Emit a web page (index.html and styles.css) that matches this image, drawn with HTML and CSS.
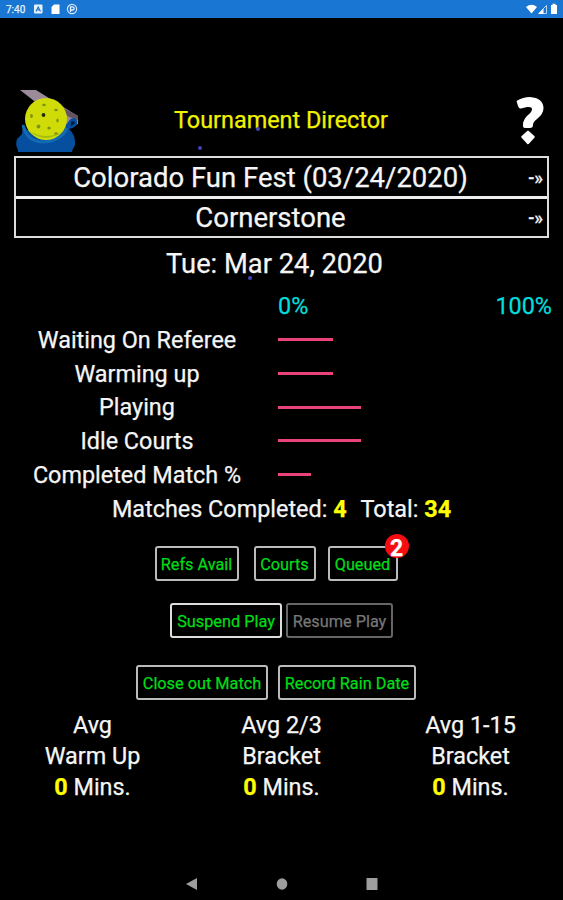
FILE: index.html
```
<!DOCTYPE html>
<html lang="en">
<head>
    <meta charset="UTF-8" />
    <meta name="viewport" content="width=device-width, initial-scale=1" />
    <title>Tournament Director</title>
    <link rel="stylesheet" href="styles.css">
</head>
<body>
    <div class="status-bar">
        <span class="time">7:40</span>
        <svg class="status-left" width="46" height="12" viewBox="0 0 46 12">
            <rect x="1" y="1.5" width="8.5" height="9" rx="1" fill="#e8f1fa" />
            <path d="M3 8.5L5.2 4L7.5 8.5M4 7h2.5" fill="none" stroke="#1976d2" stroke-width="1.2" />
            <path d="M21 1.5h5.5v9.5h-8V4z" fill="#fff" />
            <circle cx="39" cy="6" r="4.6" fill="none" stroke="#d3e5f7" stroke-width="1.2" />
            <path d="M37.5 9V3.8h2a1.6 1.6 0 0 1 0 3.2h-2" fill="none" stroke="#e8f1fa" stroke-width="1.3" />
        </svg>
        <svg class="status-right" width="34" height="12" viewBox="0 0 34 12">
            <path d="M1 4Q6.500 -.5 12 4L6.500 10.500z" fill="#fff" />
            <path d="M13.500 10.500L21.500 2.500V10.500z" fill="none" stroke="#b9d6f2" stroke-width="1" />
            <path d="M13.500 11L18.500 5.500V11z" fill="#fff" />
            <path d="M26 2h1.500V.7h3V2H32v9h-6z" fill="#fff" />
        </svg>
    </div>

    <div class="container">
        <header class="header">
            <svg class="logo" width="64" height="64" viewBox="0 0 64 64">
                <path d="M5 0H21L58 23L63 26V34L57 36L46 32z" fill="#9b8b9a" />
                <path d="M36 12L58 23L63 26V30L54 27L44 19z" fill="#65535f" />
                <path d="M8 34L12 40L48 38L54 31Q55 28 60 28Q63 30 62 34Q60 38 54 39Q61 45 60 55L57 61V62H3V60Q0 55 2 49L7 44z" fill="#064f9e" />
                <path d="M8 35Q12 52 28 52Q46 51 52 38" fill="none" stroke="#116bb5" stroke-width="3" />
                <path d="M56 32Q59 30 60 33Q59 35 56 36z" fill="#041c38" />
                <circle cx="31" cy="29" r="21" fill="#d0dc08" />
                <path d="M14 41Q31 55 48 41Q32 51 14 41" fill="#a5bd10" />
                <g fill="#7e9312">
                    <ellipse cx="29" cy="15" rx="1.800" ry="1.200" />
                    <ellipse cx="41" cy="20" rx="1.800" ry="1.200" />
                    <ellipse cx="16.500" cy="26" rx="1.400" ry="2" />
                    <ellipse cx="42.500" cy="30.500" rx="1.200" ry="2" />
                    <ellipse cx="23.500" cy="36.500" rx="1.900" ry="2.100" />
                    <ellipse cx="34" cy="38" rx="1.700" ry="1.500" />
                    <ellipse cx="41" cy="43.500" rx="1.700" ry="1.200" />
                </g>
                <circle cx="28.500" cy="25" r="1.900" fill="#252b08" />
            </svg>
            <h1>Tournament Director</h1>
            <svg class="help" width="30" height="50" viewBox="0 0 30 50">
                <path d="M1.500 4Q8 0 15 0Q28 1 28.500 11Q28.500 17 22 22Q18 25 18 28Q18 31 15 31H10Q7.500 31 8 27Q8.500 22 13 18Q17 15 17 12Q17 9.500 12 10L6 11.500Q4 12 3 9z" fill="#fff" />
                <path d="M13 35L18.500 40L13 46L7.500 40z" fill="#fff" stroke="#fff" stroke-width="2.500" stroke-linejoin="round" />
            </svg>
            <i class="spark spark-one"></i>
            <i class="spark spark-two"></i>
        </header>

        <div class="pickers">
            <div class="picker"><span class="event">Colorado Fun Fest (03/24/2020)</span><span class="arrow">-»</span></div>
            <div class="picker"><span>Cornerstone</span><span class="arrow">-»</span></div>
        </div>

        <div class="date">Tue: Mar 24, 2020<i class="spark spark-three"></i></div>

        <div class="chart">
            <div class="scale"><span>0%</span><span>100%</span></div>
            <div class="chart-row"><span class="label">Waiting On Referee</span><span class="track"><span class="bar" style="width: 20%"></span></span></div>
            <div class="chart-row"><span class="label">Warming up</span><span class="track"><span class="bar" style="width: 20%"></span></span></div>
            <div class="chart-row"><span class="label">Playing</span><span class="track"><span class="bar" style="width: 30%"></span></span></div>
            <div class="chart-row"><span class="label">Idle Courts</span><span class="track"><span class="bar" style="width: 30%"></span></span></div>
            <div class="chart-row"><span class="label">Completed Match %</span><span class="track"><span class="bar" style="width: 12%"></span></span></div>
        </div>

        <div class="totals">
            <span>Matches Completed: <b>4</b></span>
            <span>Total: <b>34</b></span>
        </div>

        <div class="buttons buttons-courts">
            <button class="refs">Refs Avail</button>
            <button class="courts">Courts</button>
            <button class="queued">Queued<span class="badge">2</span></button>
        </div>
        <div class="buttons buttons-play">
            <button class="suspend">Suspend Play</button>
            <button class="resume" disabled>Resume Play</button>
        </div>
        <div class="buttons buttons-match">
            <button class="close-out">Close out Match</button>
            <button class="rain">Record Rain Date</button>
        </div>

        <div class="averages">
            <div>Avg<br>Warm Up<br><b>0</b> Mins.</div>
            <div>Avg 2/3<br>Bracket<br><b>0</b> Mins.</div>
            <div>Avg 1-15<br>Bracket<br><b>0</b> Mins.</div>
        </div>
    </div>

    <nav class="nav-bar">
        <svg width="12" height="14" viewBox="0 0 12 14"><path d="M11 1V13L0 7z" /></svg>
        <svg width="12" height="14" viewBox="0 0 12 14"><ellipse cx="6" cy="7" rx="5.300" ry="5.800" /></svg>
        <svg width="12" height="14" viewBox="0 0 12 14"><rect x=".5" y="1" width="11" height="12" rx=".5" /></svg>
    </nav>
</body>
</html>
```
FILE: styles.css
```
* {
    box-sizing: border-box;
}
body {
    font-family: Roboto, sans-serif;
    background-color: #000;
    color: #f5f5f5;
    display: flex;
    flex-direction: column;
    height: 900px;
    margin: 0;
    font-size: 23.4px;
    -webkit-text-stroke: 0.25px;
    overflow: hidden;
}
b {
    color: #ff0;
}
.status-bar {
    background-color: #1976d2;
    height: 18px;
    display: flex;
    align-items: center;
    padding: 0 4px 0 6px;
    flex-shrink: 0;
}
.time {
    color: #e8f1fa;
    font-size: 10px;
    width: 27px;
}
.status-right {
    margin-left: auto;
}
.container {
    flex: 1;
}
.header {
    position: relative;
    display: flex;
    align-items: center;
    height: 64px;
    margin-top: 72px;
    padding: 0 18px 0 15px;
}
h1 {
    flex: 1;
    color: #f2f200;
    font-size: 23.4px;
    font-weight: 400;
    line-height: 28px;
    margin: 0 0 4px 95px;
}
.spark {
    position: absolute;
    width: 4px;
    height: 4px;
    border-radius: 50%;
    background-color: #4343c0;
}
.spark-one {
    left: 198px;
    top: 56px;
}
.spark-two {
    left: 256px;
    top: 37px;
}
.spark-three {
    left: 248px;
    top: 38px;
}
.pickers {
    margin: 2px 14px 0;
    border: 2px solid #ddd;
}
.picker {
    display: flex;
    align-items: center;
    justify-content: center;
    position: relative;
    height: 39px;
    padding-top: 1px;
    padding-right: 22px;
    font-size: 27.5px;
}
.picker:first-child {
    height: 38px;
}
.picker + .picker {
    height: 40px;
    border-top: 3px solid #eee;
    padding-top: 0;
}
.arrow {
    position: absolute;
    right: 4px;
    font-size: 18px;
    font-weight: 500;
}
.date {
    position: relative;
    height: 51px;
    padding: 10px 14px 0 0;
    font-size: 27.3px;
    line-height: 32px;
    text-align: center;
}
.scale {
    display: flex;
    justify-content: space-between;
    color: #00dede;
    height: 34px;
    margin-left: 278px;
    padding-right: 11px;
    line-height: 34px;
}
.chart-row {
    display: flex;
    align-items: center;
    height: 33.7px;
}
.label {
    width: 274px;
    text-align: center;
}
.track {
    width: 276px;
    margin-left: 4px;
}
.bar {
    display: block;
    height: 3px;
    background-color: #e9427d;
}
.totals {
    display: flex;
    justify-content: center;
    gap: 14px;
    height: 36px;
    line-height: 36px;
}
.buttons {
    display: flex;
    justify-content: center;
}
button {
    position: relative;
    height: 35px;
    padding: 1px 0 0;
    background: none;
    border: 2px solid #bbb;
    border-radius: 3px;
    color: #00dc18;
    font-family: inherit;
    font-size: 16.3px;
    white-space: nowrap;
}
button:disabled {
    border-color: #666;
    color: #777;
}
.buttons-courts {
    gap: 15px;
    margin-top: 19px;
    padding-right: 9px;
}
.buttons-play {
    gap: 4px;
    margin-top: 22px;
}
.buttons-match {
    gap: 10px;
    margin-top: 27px;
    padding-right: 11px;
}
.refs {
    width: 84px;
}
.courts {
    width: 62px;
}
.queued {
    width: 70px;
    margin-left: -3px;
    margin-right: 2px;
}
.suspend {
    width: 112px;
    border-color: #ddd;
}
.resume {
    width: 107px;
}
.close-out {
    width: 132px;
}
.rain {
    width: 138px;
}
.badge {
    position: absolute;
    top: -14px;
    right: -13px;
    width: 24px;
    height: 24px;
    border-radius: 50%;
    background-color: #f60d12;
    color: #fff;
    font-size: 23px;
    font-weight: 700;
    line-height: 29px;
    text-align: center;
}
.averages {
    display: flex;
    margin-top: 10px;
    line-height: 31px;
    text-align: center;
}
.averages div {
    width: 189px;
    padding-right: 4px;
    flex-shrink: 0;
}
.nav-bar {
    display: flex;
    justify-content: center;
    gap: 78px;
    height: 23px;
    flex-shrink: 0;
}
.nav-bar svg {
    fill: #9e9e9e;
}
```
